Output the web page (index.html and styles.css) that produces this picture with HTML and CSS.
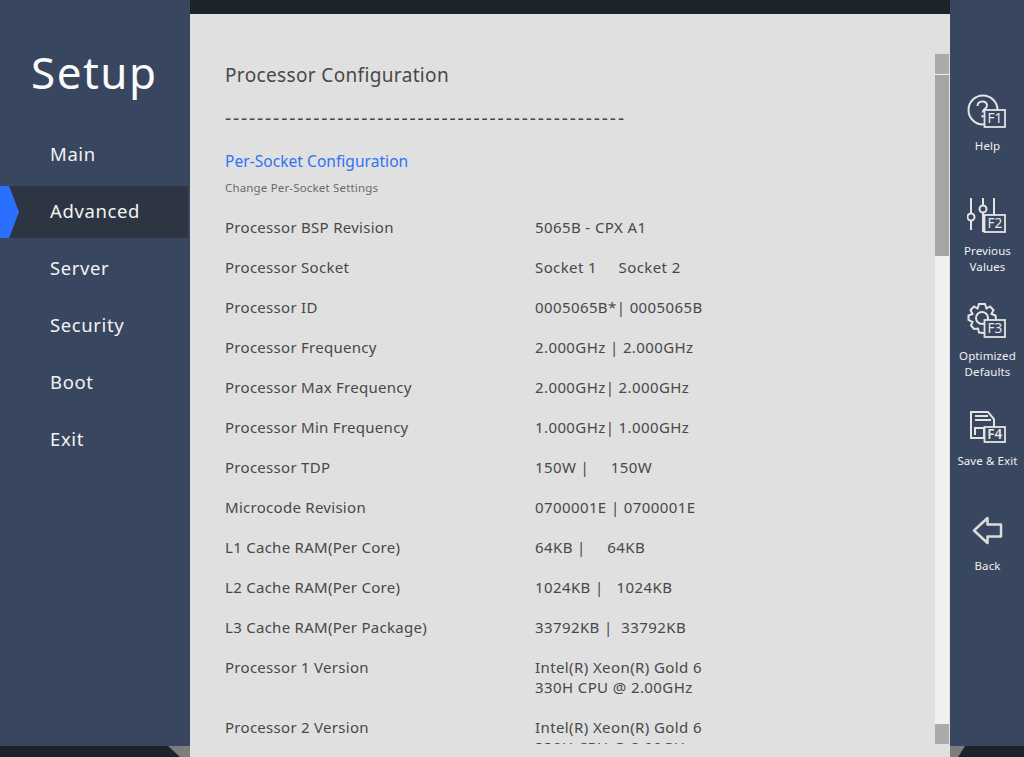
FILE: index.html
```html
<!DOCTYPE html>
<html lang="en">
<head>
<meta charset="utf-8">
<title>Setup</title>
<link rel="stylesheet" href="styles.css">
</head>
<body>
<div class="screen">
  <aside class="nav">
    <h1 class="brand">Setup</h1>
    <ul class="menu">
      <li class="menu-item">Main</li>
      <li class="menu-item active">Advanced</li>
      <li class="menu-item">Server</li>
      <li class="menu-item">Security</li>
      <li class="menu-item">Boot</li>
      <li class="menu-item">Exit</li>
    </ul>
  </aside>
  <main class="main">
    <div class="content">
      <h2 class="title">Processor Configuration</h2>
      <div class="dashes">--------------------------------------------------</div>
      <div class="link">Per-Socket Configuration</div>
      <div class="hint">Change Per-Socket Settings</div>
      <div class="row"><span class="k">Processor BSP Revision</span><span class="v">5065B - CPX A1</span></div>
      <div class="row"><span class="k">Processor Socket</span><span class="v">Socket 1&nbsp;&nbsp;&nbsp;&nbsp; Socket 2</span></div>
      <div class="row"><span class="k">Processor ID</span><span class="v">0005065B*| 0005065B</span></div>
      <div class="row"><span class="k">Processor Frequency</span><span class="v">2.000GHz | 2.000GHz</span></div>
      <div class="row"><span class="k">Processor Max Frequency</span><span class="v">2.000GHz| 2.000GHz</span></div>
      <div class="row"><span class="k">Processor Min Frequency</span><span class="v">1.000GHz| 1.000GHz</span></div>
      <div class="row"><span class="k">Processor TDP</span><span class="v">150W |&nbsp;&nbsp;&nbsp;&nbsp; 150W</span></div>
      <div class="row"><span class="k">Microcode Revision</span><span class="v">0700001E | 0700001E</span></div>
      <div class="row"><span class="k">L1 Cache RAM(Per Core)</span><span class="v">64KB |&nbsp;&nbsp;&nbsp;&nbsp; 64KB</span></div>
      <div class="row"><span class="k">L2 Cache RAM(Per Core)</span><span class="v">1024KB |&nbsp;&nbsp; 1024KB</span></div>
      <div class="row"><span class="k">L3 Cache RAM(Per Package)</span><span class="v">33792KB |&nbsp; 33792KB</span></div>
      <div class="row"><span class="k">Processor 1 Version</span><span class="v">Intel(R) Xeon(R) Gold 6<br>330H CPU @ 2.00GHz</span></div>
      <div class="row"><span class="k">Processor 2 Version</span><span class="v">Intel(R) Xeon(R) Gold 6<br>330H CPU @ 2.00GHz</span></div>
    </div>
    <div class="scrollbar">
      <div class="sb-btn"></div>
      <div class="sb-thumb"></div>
      <div class="sb-track"></div>
      <div class="sb-btn"></div>
    </div>
  </main>
  <aside class="keys">
    <div class="key">
      <svg class="ico" viewBox="0 0 40 40"><g class="ln"><circle cx="16" cy="18" r="14.500"/><path d="M10.500 14c0-6 9.500-6 9.500-.5 0 3.500-4.500 3.500-4.500 7"/><path d="M15.500 23v2.500"/></g><rect class="kbox" x="17.500" y="18" width="20.500" height="17"/><text class="kt" x="27.800" y="31">F1</text></svg>
      <div class="lbl">Help</div>
    </div>
    <div class="key">
      <svg class="ico" viewBox="0 0 40 40"><g class="ln"><path d="M4 1v15M4 24v9"/><circle cx="4" cy="20" r="3.500"/><path d="M16 1v7M16 16v19"/><circle cx="16" cy="12" r="3.500"/><path d="M27 1v17"/></g><rect class="kbox" x="17.500" y="18" width="20.500" height="17"/><text class="kt" x="27.800" y="31">F2</text></svg>
      <div class="lbl">Previous<br>Values</div>
    </div>
    <div class="key">
      <svg class="ico" viewBox="0 0 40 40"><g class="ln"><path d="M17 31l-5-.5-1-4-4 .5-3-3.500 1.500-3.500-4-2v-4.500l4-1.500-2-4L7 4.500l3.500 2L12 2h6l1.500 4.500L23 4.500 26.500 8l-2 4 4 1.500.5 3.500"/><circle cx="15" cy="16" r="6"/></g><rect class="kbox" x="17.500" y="18" width="20.500" height="17"/><text class="kt" x="27.800" y="31">F3</text></svg>
      <div class="lbl">Optimized<br>Defaults</div>
    </div>
    <div class="key">
      <svg class="ico" viewBox="0 0 40 40"><g class="ln"><path d="M4 31V5h17l6 7v10H17v9z"/><path d="M8 9h13M8 13h16"/><path d="M8 28v-7h10"/></g><rect class="kbox" x="17.500" y="20" width="20.500" height="15"/><text class="kt bold" x="27.800" y="32">F4</text></svg>
      <div class="lbl">Save &amp; Exit</div>
    </div>
    <div class="key">
      <svg class="ico" viewBox="0 0 40 40"><path class="ln arrow" d="M7 18.500L20.500 6v6.500H34v12H20.500V31z"/></svg>
      <div class="lbl">Back</div>
    </div>
  </aside>
  <div class="notch notch-left"></div>
  <div class="notch notch-right"></div>
</div>
</body>
</html>
```
FILE: styles.css
```css
* { box-sizing: border-box; }
html, body { margin: 0; padding: 0; height: 100%; overflow: hidden; }
body { background: #1d232c; font-family: "Noto Sans", "Open Sans", sans-serif; }
.screen { display: flex; width: 1024px; height: 757px; overflow: hidden; position: relative; }

.nav { width: 190px; height: 746px; background: #39465f; flex: none; color: #fafafa; padding-top: 44px; }
.brand { margin: 0 0 0 31px; font-size: 44px; line-height: 56px; font-weight: 400; letter-spacing: 1.500px; }
.menu { list-style: none; margin: 27px 0 0; padding: 0; }
.menu-item { height: 57px; line-height: 54px; padding-left: 50px; font-size: 18.500px; letter-spacing: .6px; color: #f2f2f2; }
.menu-item.active { position: relative; background: #2d3542; width: 188px; height: 52px; margin: 2px 0 3px; line-height: 50px; }
.menu-item.active::before { content: ""; position: absolute; left: 0; top: 0; width: 19px; height: 52px; background: #2b6fff; clip-path: polygon(0 0, 9px 0, 19px 50%, 9px 100%, 0 100%); }

.main { width: 760px; height: 743px; margin-top: 14px; background: #e0e0e0; flex: none; display: flex; }
.content { width: 745px; height: 730px; overflow: hidden; padding: 46px 0 0 35px; color: #484848; }
.title { margin: 0; font-size: 19px; line-height: 30px; font-weight: 400; letter-spacing: .35px; color: #484848; }
.dashes { margin-top: 16px; font-size: 19px; line-height: 24px; letter-spacing: 1.900px; white-space: nowrap; }
.link { margin-top: 19px; font-size: 15.500px; line-height: 24px; color: #2f73f5; letter-spacing: .05px; }
.hint { margin-top: 6px; font-size: 11.500px; line-height: 18px; color: #6a6a6a; letter-spacing: .17px; }
.row { display: flex; font-size: 15px; line-height: 20px; letter-spacing: .4px; margin-top: 20px; }
.k { width: 310px; flex: none; letter-spacing: .28px; }
.v { flex: none; }

.scrollbar { width: 14px; height: 690px; margin-top: 40px; background: #f0f0f0; display: flex; flex-direction: column; }
.sb-btn { height: 20px; background: #aaa; flex: none; }
.sb-thumb { height: 181px; margin-top: 1px; background: #a5a5a5; flex: none; }
.sb-track { flex: 1; }

.keys { width: 74px; height: 746px; background: #39465f; flex: none; padding-top: 92px; color: #f0f0f0; }
.key { height: 105px; display: flex; flex-direction: column; align-items: center; }
.ico { width: 40px; height: 40px; display: block; flex: none; }
.ln { fill: none; stroke: #e4e4e2; stroke-width: 2; }
.arrow { stroke-width: 2.500; stroke-linejoin: round; stroke: #dcdcda; }
.kbox { fill: #39465f; stroke: #e4e4e2; stroke-width: 1.800; }
.kt { font-size: 13.500px; fill: #e8e8e8; text-anchor: middle; }
.kt.bold { font-weight: 600; }
.lbl { margin-top: 6px; padding-left: 1px; font-size: 11.500px; line-height: 16px; text-align: center; letter-spacing: .1px; white-space: nowrap; }

.notch { position: absolute; bottom: 0; height: 11px; background: #7d7d7a; }
.notch-left { left: 168px; width: 22px; clip-path: polygon(0 0, 100% 0, 100% 100%, 12px 100%); }
.notch-right { left: 950px; width: 15px; clip-path: polygon(0 0, 100% 0, 8px 100%, 0 100%); }
```
